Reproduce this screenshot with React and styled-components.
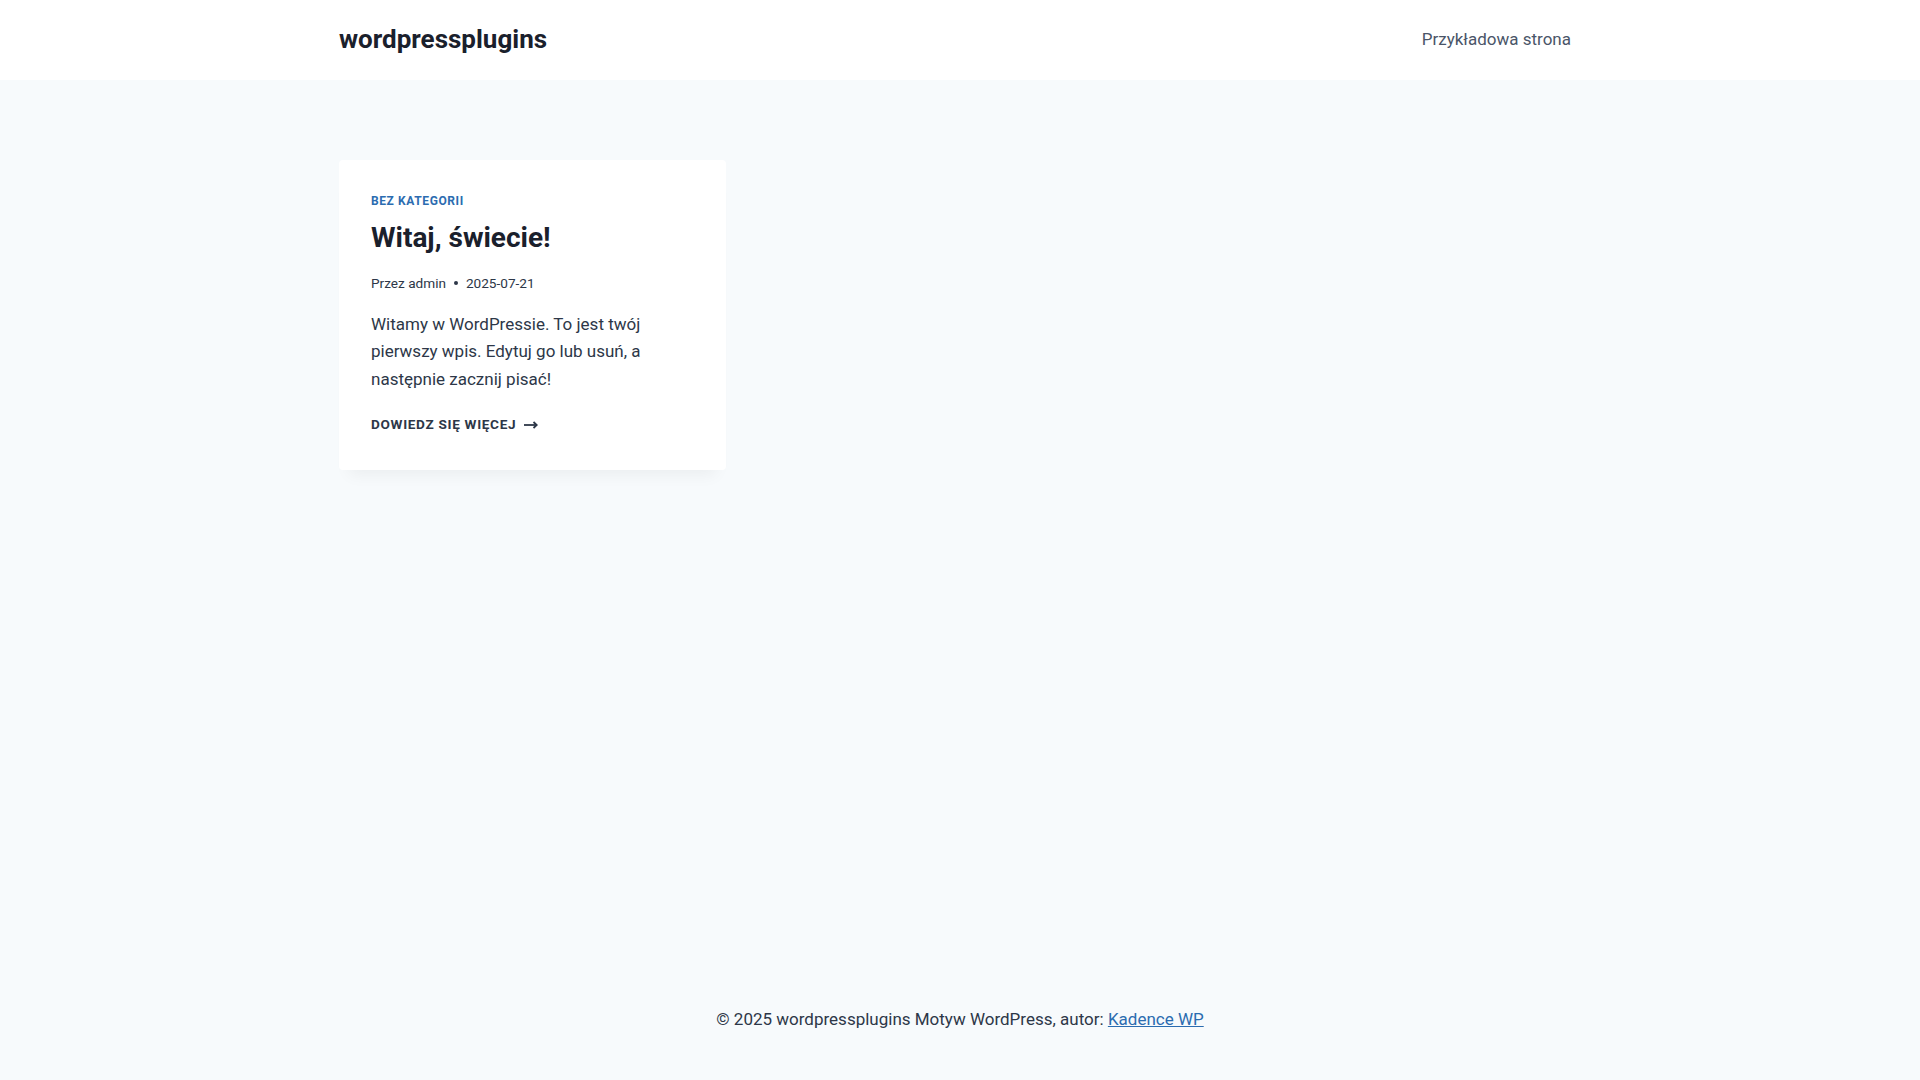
import React from 'react';
import styled, { createGlobalStyle } from 'styled-components';

const Global = createGlobalStyle`
html, body {
    margin: 0;
    padding: 0;
}
body {
    font-family: Roboto, "Liberation Sans", sans-serif;
    font-size: 17px;
    line-height: 1.6;
    color: #2d3748;
    background: #f7fafc;
    -webkit-font-smoothing: antialiased;
}
*, *::before, *::after {
    box-sizing: border-box;
}
a {
    text-decoration: none;
    color: inherit;
}
`

function ArrowRight() {
    return (
        <svg width="14" height="8" viewBox="0 0 14 8" fill="none">
            <path d="M0 4h12" stroke="currentColor" strokeWidth="1.8" />
            <path d="M9.5 1l3.2 3-3.2 3" stroke="currentColor" strokeWidth="1.8" fill="none" />
        </svg>
    )
}

export default function App() {
    return (
        <>
            <Global />
            <Page>
                <Header>
                    <Container>
                        <HeaderRow>
                            <Logo href="#">wordpressplugins</Logo>
                            <Nav>
                                <NavLink href="#">Przykładowa strona</NavLink>
                            </Nav>
                        </HeaderRow>
                    </Container>
                </Header>

                <Main>
                    <Container>
                        <Grid>
                            <Card>
                                <Category href="#">Bez kategorii</Category>
                                <Title><a href="#">Witaj, świecie!</a></Title>
                                <Meta>
                                    <span>Przez <a href="#">admin</a></span>
                                    <Dot />
                                    <span>2025-07-21</span>
                                </Meta>
                                <Excerpt>
                                    Witamy w WordPressie. To jest twój pierwszy wpis. Edytuj go lub usuń, a następnie zacznij pisać!
                                </Excerpt>
                                <MoreLink href="#">
                                    Dowiedz się więcej
                                    <ArrowRight />
                                </MoreLink>
                            </Card>
                        </Grid>
                    </Container>
                </Main>

                <Footer>
                    <Container>
                        <FooterText>
                            © 2025 wordpressplugins Motyw WordPress, autor: <FooterLink href="#">Kadence WP</FooterLink>
                        </FooterText>
                    </Container>
                </Footer>
            </Page>
        </>
    )
}

const Page = styled.div`
min-height: 100vh;
display: flex;
flex-direction: column;
`

const Container = styled.div`
max-width: 1290px;
margin: 0 auto;
padding: 0 24px;
`

const Header = styled.header`
background: #ffffff;
`

const HeaderRow = styled.div`
height: 80px;
display: flex;
align-items: center;
justify-content: space-between;
`

const Logo = styled.a`
font-size: 26px;
font-weight: 700;
line-height: 1.2;
color: #1a202c;
`

const Nav = styled.nav`
display: flex;
align-items: center;
`

const NavLink = styled.a`
font-size: 17px;
color: #4a5568;
padding: 10px 10px;
`

const Main = styled.main`
flex: 1;
padding: 80px 0;
`

const Grid = styled.div`
display: grid;
grid-template-columns: repeat(3, 1fr);
gap: 40px;
`

const Card = styled.article`
background: #ffffff;
border-radius: 4px;
box-shadow: 0px 15px 15px -10px rgba(0, 0, 0, 0.05);
padding: 32px;
`

const Category = styled.a`
display: block;
font-size: 12px;
font-weight: 700;
letter-spacing: 0.05em;
text-transform: uppercase;
color: #2b6cb0;
line-height: 1.6;
margin-bottom: 6px;
`

const Title = styled.h2`
margin: 0 0 13px;
font-size: 28px;
font-weight: 700;
line-height: 1.5;
color: #1a202c;
`

const Meta = styled.div`
display: flex;
align-items: center;
font-size: 13.6px;
line-height: 1.65;
color: #2d3748;
margin-bottom: 16px;
`

const Dot = styled.span`
width: 4px;
height: 4px;
border-radius: 50%;
background: #2d3748;
margin: 0 8px;
`

const Excerpt = styled.p`
margin: 0 0 17px;
font-size: 17px;
line-height: 1.625;
color: #2d3748;
`

const MoreLink = styled.a`
display: inline-flex;
align-items: center;
gap: 8px;
font-size: 13.6px;
font-weight: 700;
letter-spacing: 0.05em;
text-transform: uppercase;
color: #2d3748;
`

const Footer = styled.footer`
padding: 30px 0 47px;
`

const FooterText = styled.p`
margin: 0;
text-align: center;
font-size: 17px;
line-height: 1.6;
color: #2d3748;
`

const FooterLink = styled.a`
color: #2b6cb0;
text-decoration: underline;
`
